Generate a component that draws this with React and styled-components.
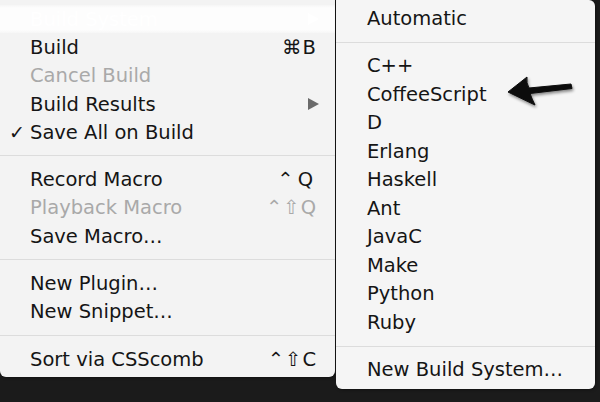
import React from "react";
import styled, { createGlobalStyle } from "styled-components";

const GlobalStyle = createGlobalStyle`
  html, body {
    margin: 0;
    padding: 0;
    background: #1b1b1b;
    overflow: hidden;
  }
`;

const Stage = styled.div`
  position: relative;
  width: 600px;
  height: 402px;
  display: flex;
  align-items: flex-start;
  font-family: "DejaVu Sans", "Liberation Sans", sans-serif;
  font-size: 19.5px;
  color: #151515;
`;

const Menu = styled.div`
  width: ${(props) => props.w}px;
  background: ${(props) => props.bg};
  border-radius: ${(props) => props.radius};
  padding: ${(props) => props.pad};
  box-sizing: border-box;
  display: flex;
  flex-direction: column;
  box-shadow: 1px 1px 3px rgba(0, 0, 0, 0.35);
  margin-left: ${(props) => props.ml || 0}px;
`;

const Item = styled.div`
  height: ${(props) => props.h}px;
  display: flex;
  align-items: center;
  padding-right: 18px;
  white-space: nowrap;
  color: ${(props) =>
    props.disabled ? "#a9a9a9" : props.active ? "#ffffff" : "#151515"};
  background: ${(props) =>
    props.active
      ? "linear-gradient(#f6f6f6 0, #fdfdfd 3px, #fdfdfd 25px, #f6f6f6 100%)"
      : "transparent"};
`;

const Gutter = styled.span`
  width: ${(props) => props.w}px;
  flex: none;
  box-sizing: border-box;
  padding-left: 9px;
  font-size: 19px;
`;

const Label = styled.span`
  flex: 1;
`;

const Shortcut = styled.span`
  letter-spacing: ${(props) => props.spacing}px;
  color: inherit;
`;

const SubArrow = styled.span`
  width: 0;
  height: 0;
  margin-right: -2px;
  border-top: 6px solid transparent;
  border-bottom: 6px solid transparent;
  border-left: 11px solid ${(props) => (props.light ? "#ffffff" : "#6a6a6a")};
`;

const Separator = styled.div`
  height: 19px;
  display: flex;
  align-items: center;
  &::after {
    content: "";
    flex: 1;
    height: 1px;
    background: #dcdcdc;
  }
`;

const Pointer = styled.svg`
  position: absolute;
  left: 505px;
  top: 74px;
  filter: drop-shadow(1px 2px 1.5px rgba(0, 0, 0, 0.45));
`;

const mainItems = [
  { label: "Build System", arrow: true, active: true },
  { label: "Build", key: "⌘B", spacing: 1 },
  { label: "Cancel Build", disabled: true },
  { label: "Build Results", arrow: true },
  { label: "Save All on Build", checked: true },
  "sep",
  { label: "Record Macro", key: "⌃Q", spacing: 4 },
  { label: "Playback Macro", key: "⌃⇧Q", spacing: 1, disabled: true },
  { label: "Save Macro…" },
  "sep",
  { label: "New Plugin…" },
  { label: "New Snippet…" },
  "sep",
  { label: "Sort via CSScomb", key: "⌃⇧C", spacing: 1 },
];

const subItems = [
  "Automatic",
  "sep",
  "C++",
  "CoffeeScript",
  "D",
  "Erlang",
  "Haskell",
  "Ant",
  "JavaC",
  "Make",
  "Python",
  "Ruby",
  "sep",
  "New Build System…",
];

const App = () => {
  return (
    <Stage>
      <GlobalStyle />
      <Menu w={335} bg="#f3f3f3" radius="0 0 6px 6px" pad="5px 0 4px">
        {mainItems.map((item, i) =>
          item === "sep" ? (
            <Separator key={i} />
          ) : (
            <Item
              key={i}
              h={28.3}
              active={item.active}
              disabled={item.disabled}
            >
              <Gutter w={30}>{item.checked ? "✓" : ""}</Gutter>
              <Label>{item.label}</Label>
              {item.key && <Shortcut spacing={item.spacing}>{item.key}</Shortcut>}
              {item.arrow && <SubArrow light={item.active} />}
            </Item>
          )
        )}
      </Menu>
      <Menu w={259} ml={1} bg="#f5f5f5" radius="0 6px 6px 6px" pad="4px 0 5px">
        {subItems.map((item, i) =>
          item === "sep" ? (
            <Separator key={i} />
          ) : (
            <Item key={i} h={28.5}>
              <Gutter w={31} />
              <Label>{item}</Label>
            </Item>
          )
        )}
      </Menu>
      <Pointer width="72" height="36" viewBox="0 0 72 36">
        <path
          d="M3 18 L22 3 Q21 9 24 14 L66 10 L67 14.5 L25 19.5 Q27 25 30 31 Z"
          fill="#0c0c0c"
          strokeLinejoin="round"
          stroke="#0c0c0c"
          strokeWidth="1"
        />
      </Pointer>
    </Stage>
  );
};

export default App;
